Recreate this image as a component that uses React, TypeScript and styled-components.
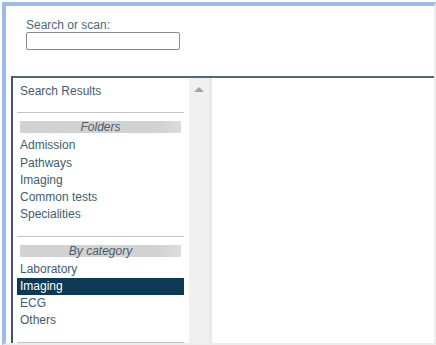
import React from 'react';
import styled, { createGlobalStyle } from 'styled-components';

const GlobalStyle = createGlobalStyle`
  html, body {
    margin: 0;
    padding: 0;
    background: #fff;
  }
  body {
    font-family: 'Liberation Sans', Arial, sans-serif;
    font-size: 12px;
  }
`;

interface Section {
  title: string;
  items: string[];
}

const sections: Section[] = [
  { title: 'Folders', items: ['Admission', 'Pathways', 'Imaging', 'Common tests', 'Specialities'] },
  { title: 'By category', items: ['Laboratory', 'Imaging', 'ECG', 'Others'] },
];

const selected = { section: 'By category', item: 'Imaging' };

function App() {
  return (
    <>
      <GlobalStyle />
      <Frame>
        <SearchArea>
          <SearchLabel htmlFor="scan">Search or scan:</SearchLabel>
          <SearchInput id="scan" type="text" />
        </SearchArea>
        <Panel>
          <Sidebar>
            <Item>Search Results</Item>
            {sections.map((s) => (
              <React.Fragment key={s.title}>
                <Separator />
                <SectionHeader>{s.title}</SectionHeader>
                <ItemList>
                  {s.items.map((it) => (
                    <Item
                      key={it}
                      $active={s.title === selected.section && it === selected.item}
                    >
                      {it}
                    </Item>
                  ))}
                </ItemList>
              </React.Fragment>
            ))}
            <Separator />
          </Sidebar>
          <Scrollbar>
            <ArrowUp />
          </Scrollbar>
          <Content />
        </Panel>
      </Frame>
    </>
  );
}

const Frame = styled.div`
  margin: 2px 0 0 2px;
  width: 428px;
  height: 337px;
  border-top: 4px solid #9dbbe8;
  border-left: 4px solid #9dbbe8;
  border-right: 2px solid #ececec;
  border-bottom: 2px solid #ececec;
  display: flex;
  flex-direction: column;
  overflow: hidden;
  background: #fff;
`;

const SearchArea = styled.div`
  flex-shrink: 0;
  display: flex;
  flex-direction: column;
  align-items: flex-start;
  padding: 13px 0 0 20px;
  height: 70px;
  box-sizing: border-box;
`;

const SearchLabel = styled.label`
  color: #4c6a7e;
  font-size: 12px;
  line-height: 13px;
`;

const SearchInput = styled.input`
  width: 154px;
  height: 18px;
  box-sizing: border-box;
  border: 1px solid #8a8a8a;
  border-radius: 2px;
  padding: 0 3px;
  margin: 0;
  background: #fff;
  outline: none;
`;

const Panel = styled.div`
  flex: 1;
  display: flex;
  margin-left: 5px;
  border-top: 2px solid #4e6878;
  border-left: 2px solid #3e5668;
  min-height: 0;
`;

const Sidebar = styled.div`
  width: 176px;
  padding-top: 5px;
  display: flex;
  flex-direction: column;
  overflow: hidden;
`;

const ItemList = styled.div`
  display: flex;
  flex-direction: column;
  margin-top: 4px;
`;

const Item = styled.div<{ $active?: boolean }>`
  flex-shrink: 0;
  height: 17.25px;
  line-height: 17px;
  margin: 0 5px 0 4px;
  padding-left: 3px;
  color: ${({ $active }) => ($active ? '#fff' : '#3e5c70')};
  background: ${({ $active }) => ($active ? '#0c3a55' : 'transparent')};
  white-space: nowrap;
`;

const Separator = styled.div`
  flex-shrink: 0;
  height: 1px;
  background: #c4c4c4;
  margin: 12px 5px 8px 4px;
`;

const SectionHeader = styled.div`
  flex-shrink: 0;
  height: 12px;
  line-height: 12px;
  margin: 0 8px 0 7px;
  background: linear-gradient(to right, #d2d2d2 85%, #dcdcdc);
  color: #4d5d6a;
  font-style: italic;
  text-align: center;
`;

const Scrollbar = styled.div`
  width: 20px;
  background: #f0f0f0;
  border-right: 3px solid #e8e8e8;
  display: flex;
  justify-content: center;
  padding-top: 9px;
  box-sizing: content-box;
`;

const ArrowUp = styled.div`
  width: 0;
  height: 0;
  border-left: 5px solid transparent;
  border-right: 5px solid transparent;
  border-bottom: 5px solid #a4a4a4;
`;

const Content = styled.div`
  flex: 1;
  background: #fff;
`;

export default App;
